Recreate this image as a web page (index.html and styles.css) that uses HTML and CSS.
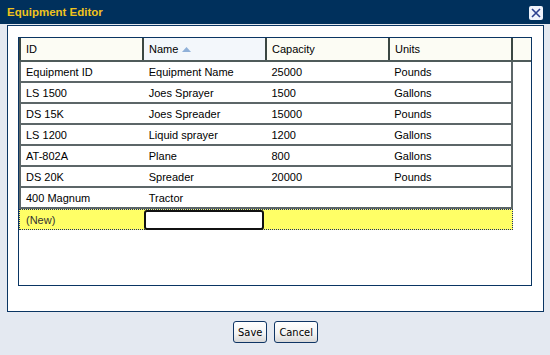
FILE: index.html
```html
<!DOCTYPE html>
<html lang="en">
<head>
  <meta charset="UTF-8">
  <title>Equipment Editor</title>
  <link rel="stylesheet" href="styles.css">
</head>
<body>

  <div class="titlebar">
    <span class="title">Equipment Editor</span>
    <button class="close" title="Close">
      <svg width="10" height="10" viewBox="0 0 10 10"><path d="M1 1 L9 9 M9 1 L1 9" stroke="#2a3f8f" stroke-width="1.6"/></svg>
    </button>
  </div>

  <div class="panel">
    <div class="grid">
      <div class="grid-head">
        <div class="hcell">ID</div>
        <div class="hcell sorted">Name
          <svg class="sort" width="9" height="5" viewBox="0 0 9 5"><path d="M0 5 L4.5 0 L9 5 Z" fill="#8fb0d8"/></svg>
        </div>
        <div class="hcell">Capacity</div>
        <div class="hcell">Units</div>
        <div class="hfill"></div>
      </div>

      <div class="rows" id="rows"></div>

      <div class="row new-row">
        <div class="cell">(New)</div>
        <div class="cell"><input class="edit" type="text"></div>
        <div class="cell"></div>
        <div class="cell"></div>
      </div>
    </div>
  </div>

  <div class="buttons">
    <button class="btn">Save</button>
    <button class="btn">Cancel</button>
  </div>

  <script>
    const equipment = [
      ["Equipment ID", "Equipment Name", "25000", "Pounds"],
      ["LS 1500", "Joes Sprayer", "1500", "Gallons"],
      ["DS 15K", "Joes Spreader", "15000", "Pounds"],
      ["LS 1200", "Liquid sprayer", "1200", "Gallons"],
      ["AT-802A", "Plane", "800", "Gallons"],
      ["DS 20K", "Spreader", "20000", "Pounds"],
      ["400 Magnum", "Tractor", "", ""]
    ];

    const rows = document.getElementById("rows");
    equipment.forEach(item => {
      const row = document.createElement("div");
      row.className = "row";
      row.innerHTML = item.map(v => `<div class="cell">${v}</div>`).join("");
      rows.appendChild(row);
    });
  </script>

</body>
</html>
```

FILE: styles.css
```css
body {
  margin: 0;
  background: #e4e9f1;
  font-family: 'Liberation Sans', Arial, sans-serif;
  font-size: 11px;
  color: #000;
}

.titlebar {
  height: 24px;
  background: #00305c;
  display: flex;
  align-items: center;
  justify-content: space-between;
  padding: 0 7px 0 7px;
}

.title {
  color: #f0c31c;
  font-weight: bold;
  font-size: 11.5px;
  margin-top: -1px;
}

.close {
  width: 14px;
  height: 14px;
  padding: 0;
  border: none;
  border-radius: 2px;
  background: #eef2fb;
  display: flex;
  align-items: center;
  justify-content: center;
  margin-top: 1px;
}

.panel {
  margin: 1px 6px 0 7px;
  background: #fff;
  border: 1px solid #0a3563;
  padding: 11px 11px 25px 10px;
}

.grid {
  border: 1px solid #0a3563;
  height: 247px;
  background: #fff;
}

.grid-head {
  display: flex;
  height: 22px;
  border-bottom: 2px solid #4f5b5a;
  background: #fcfcf4;
}

.hcell {
  width: 116px;
  border-left: 2px solid #3b4742;
  padding-left: 5px;
  display: flex;
  align-items: center;
}

.hcell.sorted {
  background: #f3f7fb;
}

.sort {
  margin-left: 4px;
}

.hfill {
  flex: 1;
  border-left: 2px solid #3b4742;
}

.row {
  display: flex;
  width: 490px;
  height: 19px;
  border-left: 2px solid #5c6668;
  border-right: 2px solid #5c6668;
  border-bottom: 2px solid #5c6668;
}

.cell {
  width: 123px;
  padding-left: 6px;
  box-sizing: border-box;
  display: flex;
  align-items: center;
}

.cell:first-child {
  width: 122px;
  padding-left: 5px;
}

.new-row {
  background: #ffff66;
  border: 1px dotted #1b2d6b;
  height: 19px;
  width: 492px;
}

.new-row .cell:first-child {
  color: #333;
  padding-left: 6px;
}

.edit {
  width: 120px;
  height: 20px;
  box-sizing: border-box;
  margin-left: -4px;
  border: 2px solid #111;
  border-radius: 3px;
  background: #fff;
  outline: none;
}

.buttons {
  display: flex;
  justify-content: center;
  gap: 7px;
  margin-top: 9px;
  margin-left: 1px;
}

.btn {
  font-family: 'DejaVu Sans Condensed', 'DejaVu Sans', Tahoma, sans-serif;
  font-stretch: condensed;
  font-size: 11px;
  height: 22px;
  padding: 0 4px;
  border: 1px solid #0f3565;
  border-radius: 3px;
  background: linear-gradient(#ffffff 0%, #f4f4f4 55%, #d8d8d8 100%);
  color: #000;
}
```
